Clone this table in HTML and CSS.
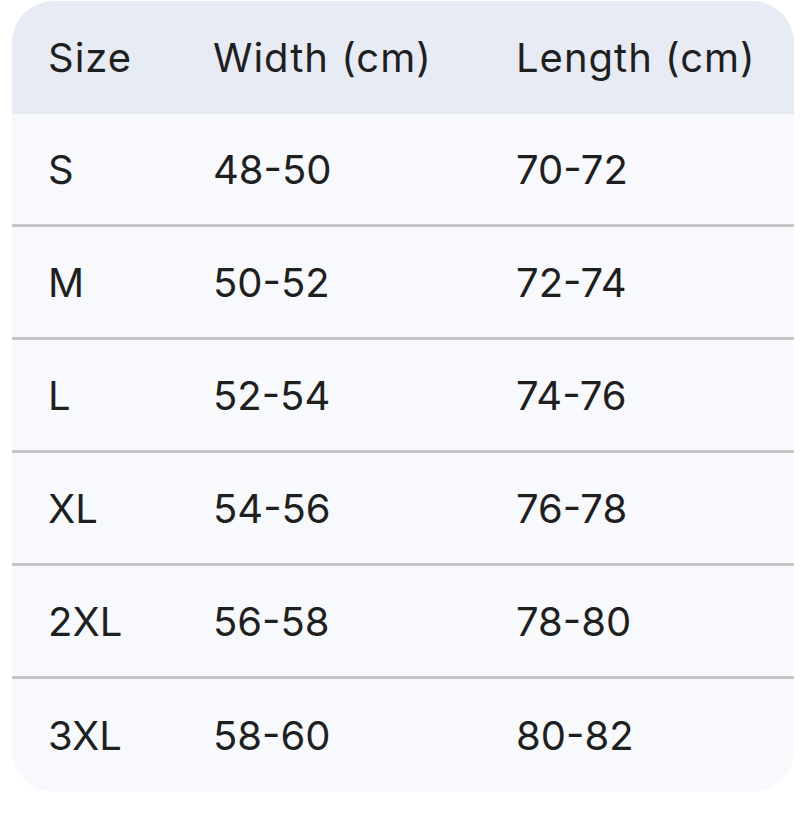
FILE: index.html
```html
<!DOCTYPE html>
<html>
<head>
<meta charset="utf-8">
<link rel="stylesheet" href="styles.css">
</head>
<body>
<div class="page">
  <div class="table">
    <div class="row head">
      <div class="cell">Size</div>
      <div class="cell">Width (cm)</div>
      <div class="cell">Length (cm)</div>
    </div>
    <div class="row">
      <div class="cell">S</div>
      <div class="cell">48-50</div>
      <div class="cell">70-72</div>
    </div>
    <div class="row">
      <div class="cell">M</div>
      <div class="cell">50-52</div>
      <div class="cell">72-74</div>
    </div>
    <div class="row">
      <div class="cell">L</div>
      <div class="cell">52-54</div>
      <div class="cell">74-76</div>
    </div>
    <div class="row">
      <div class="cell">XL</div>
      <div class="cell">54-56</div>
      <div class="cell">76-78</div>
    </div>
    <div class="row">
      <div class="cell">2XL</div>
      <div class="cell">56-58</div>
      <div class="cell">78-80</div>
    </div>
    <div class="row last">
      <div class="cell">3XL</div>
      <div class="cell">58-60</div>
      <div class="cell">80-82</div>
    </div>
  </div>
</div>
</body>
</html>
```

FILE: styles.css
```css
html, body {
  margin: 0;
  padding: 0;
  background: #ffffff;
}
.page {
  padding: 1px 8px 0 12px;
}
.table {
  width: 782px;
  border-radius: 42px;
  overflow: hidden;
  background: #f7f9fd;
  font-family: Inter, Roboto, sans-serif;
  font-size: 40px;
  color: #1f1f1f;
}
.row {
  display: grid;
  grid-template-columns: 165px 303px 314px;
  height: 110px;
  align-items: center;
  border-bottom: 3px solid #c6c6c6;
}
.row.head {
  height: 113px;
  background: #e7ebf3;
  border-bottom: none;
  letter-spacing: 1px;
}
.row.last {
  height: 113px;
  border-bottom: none;
}
.cell {
  padding-left: 36px;
  white-space: nowrap;
}
```
